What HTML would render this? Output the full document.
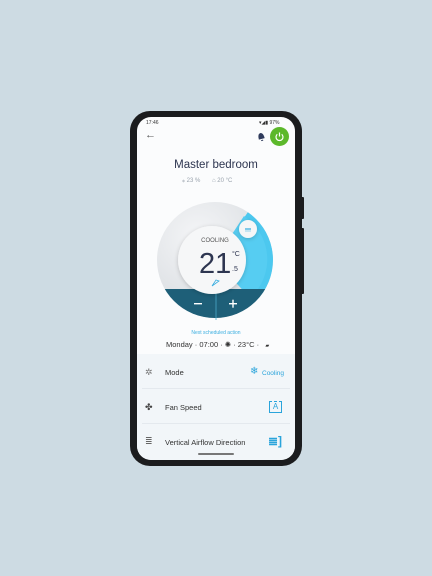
<!DOCTYPE html>
<html><head><style>
*{margin:0;padding:0;box-sizing:border-box}
body{width:432px;height:576px;background:#cddbe3;position:relative;overflow:hidden;font-family:"Liberation Sans",sans-serif}
.phone{position:absolute;left:130px;top:111px;width:172px;height:355px;background:#1b1c1e;border-radius:20px}
.btn{position:absolute;background:#1b1c1e;width:3px;left:301px;border-radius:1px}
.screen{position:absolute;left:137px;top:117px;width:158px;height:343px;background:#fbfcfd;border-radius:14px;overflow:hidden}
.t{position:absolute;white-space:nowrap}
.list{position:absolute;left:0;top:237px;width:158px;height:106px;background:#f2f6f9}
.row{position:absolute;left:5px;width:148px;height:35px;border-bottom:1px solid #e4e9ee}
</style></head><body>
<div class="phone"></div>
<div class="btn" style="top:197px;height:22px"></div>
<div class="btn" style="top:228px;height:66px"></div>
<div class="screen">
 <div class="t" style="left:9px;top:3px;font-size:5px;color:#333">17:46</div>
 <div class="t" style="left:122px;top:3px;font-size:5px;color:#333">▾◢▮ 97%</div>
 <div class="t" style="left:8px;top:12px;font-size:11px;color:#555">←</div>
 <svg class="t" style="left:119px;top:14px" width="10" height="11" viewBox="0 0 10 11"><path d="M2 8 Q2 2 5 2 Q8 2 8 8 Z M4 9 h2 v1 h-2z" fill="#2f3b5c" transform="rotate(-15 5 5)"/></svg>
 <div class="t" style="left:133px;top:10px;width:19px;height:19px;border-radius:50%;background:#5cb82b"></div>
 <svg class="t" style="left:137px;top:14px" width="11" height="11" viewBox="0 0 11 11"><path d="M3.3 3.3 A3.5 3.5 0 1 0 7.7 3.3" fill="none" stroke="#fff" stroke-width="1.2"/><path d="M5.5 1.5 V5.5" stroke="#fff" stroke-width="1.2"/></svg>
 <div class="t" style="left:0;width:158px;text-align:center;top:42px;font-size:11.5px;color:#2d3550">Master bedroom</div>
 <div class="t" style="left:45px;top:60px;font-size:6px;color:#9aa3ad">⁎ 23 %&nbsp;&nbsp;&nbsp;&nbsp;&nbsp;&nbsp;&nbsp;⌂ 20 °C</div>
 <div class="list">
  <div class="row" style="top:0"></div><div class="row" style="top:35px"></div>
 </div>
 <svg class="t" style="left:0;top:0" width="158" height="240" viewBox="137 117 158 240">
  <defs><radialGradient id="g" cx="0.35" cy="0.3" r="0.8"><stop offset="0" stop-color="#f4f5f7"/><stop offset="1" stop-color="#d6dade"/></radialGradient>
  <clipPath id="c"><circle cx="215" cy="260" r="58"/></clipPath>
  <filter id="s" x="-30%" y="-30%" width="160%" height="160%"><feDropShadow dx="0" dy="1" stdDeviation="2" flood-opacity="0.2"/></filter></defs>
  <circle cx="215" cy="260" r="58" fill="url(#g)"/>
  <path d="M248 212 A58 58 0 0 1 255 302 L215 260Z" fill="#4cc8ef" clip-path="url(#c)"/>
  <path d="M244 216 A52 52 0 0 1 250 298 L215 260Z" fill="#56cdf2" clip-path="url(#c)"/>
  <rect x="150" y="289" width="130" height="40" fill="#1e5f78" clip-path="url(#c)"/>
  <line x1="216" y1="289" x2="216" y2="320" stroke="#4aa9c9" stroke-width="0.8"/>
  <circle cx="212" cy="260" r="34" fill="#f6f7f8" filter="url(#s)"/>
  <circle cx="248" cy="229" r="9" fill="#f5f6f7" filter="url(#s)"/>
  <line x1="245" y1="229" x2="251" y2="229" stroke="#3aaee0" stroke-width="1.3"/>
  <line x1="245" y1="231" x2="251" y2="231" stroke="#3aaee0" stroke-width="0.6"/>
  <text x="215" y="242" font-size="6" fill="#555" text-anchor="middle" font-family="Liberation Sans">COOLING</text>
  <text x="199" y="273" font-size="29" fill="#2d3550" font-family="Liberation Sans">21</text>
  <text x="232" y="256" font-size="7" fill="#2d3550" font-family="Liberation Sans">°C</text>
  <text x="232" y="271" font-size="7" fill="#2d3550" font-family="Liberation Sans">.5</text>
  <path d="M212 286 L216 280 L219 281 Z" fill="none" stroke="#3aaee0" stroke-width="0.8"/>
  <rect x="194" y="303" width="8" height="1.4" fill="#fff"/>
  <rect x="229" y="303" width="8" height="1.4" fill="#fff"/><rect x="232.3" y="299.7" width="1.4" height="8" fill="#fff"/>
 </svg>
 <div class="t" style="left:0;width:158px;text-align:center;top:213px;font-size:5px;color:#3aaee0">Next scheduled action</div>
 <div class="t" style="left:29px;top:223px;font-size:7.5px;color:#333">Monday · 07:00 · ✺ · 23°C · &nbsp;&nbsp;<span style="font-size:5px">▰</span></div>
 <div class="t" style="left:8px;top:250px;font-size:9px;color:#777">✲</div>
 <div class="t" style="left:28px;top:251px;font-size:7.5px;color:#333">Mode</div>
 <div class="t" style="left:113px;top:249px;font-size:10px;color:#2aa4db">❄</div>
 <div class="t" style="left:125px;top:253px;font-size:6.5px;color:#2aa4db">Cooling</div>
 <div class="t" style="left:8px;top:285px;font-size:9px;color:#444">✤</div>
 <div class="t" style="left:28px;top:286px;font-size:7.5px;color:#333">Fan Speed</div>
 <div class="t" style="left:132px;top:284px;width:13px;height:12px;border:1.3px solid #2aa4db;border-top-style:dashed;font-size:8px;color:#2aa4db;text-align:center;line-height:10px">A</div>
 <div class="t" style="left:8px;top:319px;font-size:9px;color:#666">≣</div>
 <div class="t" style="left:28px;top:321px;font-size:7.5px;color:#333">Vertical Airflow Direction</div>
 <div class="t" style="left:131px;top:317px;font-size:12px;color:#2aa4db;font-weight:bold">≣]</div>
 <div class="t" style="left:61px;top:336px;width:36px;height:2px;border-radius:1px;background:#777"></div>
</div>
</body></html>
